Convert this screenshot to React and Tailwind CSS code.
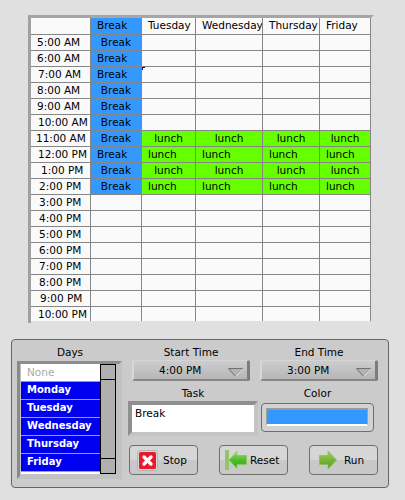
const font = { fontFamily: '"DejaVu Sans", sans-serif' };
const times = ['5:00 AM','6:00 AM','7:00 AM','8:00 AM','9:00 AM','10:00 AM','11:00 AM','12:00 PM','1:00 PM','2:00 PM','3:00 PM','4:00 PM','5:00 PM','6:00 PM','7:00 PM','8:00 PM','9:00 PM','10:00 PM'];
const timePad = { '5:00 AM':'pl-[6px]','6:00 AM':'pl-[6px]','7:00 AM':'pl-[7px]','8:00 AM':'pl-[6px]','9:00 AM':'pl-[6px]','10:00 AM':'pl-[7px]','11:00 AM':'pl-[5px]','12:00 PM':'pl-[7px]','1:00 PM':'pl-[10px]','2:00 PM':'pl-[8px]','3:00 PM':'pl-[8px]','4:00 PM':'pl-[8px]','5:00 PM':'pl-[8px]','6:00 PM':'pl-[8px]','7:00 PM':'pl-[8px]','8:00 PM':'pl-[8px]','9:00 PM':'pl-[9px]','10:00 PM':'pl-[7px]' };
const breakLeft = ['6:00 AM','7:00 AM','12:00 PM'];
const lunchRows = { '11:00 AM':'center','12:00 PM':'left','1:00 PM':'center','2:00 PM':'left' };

function Cell({ children, color, align, extra }) {
  const bg = color === 'blue' ? 'bg-[#3399ff]' : color === 'green' ? 'bg-[#66ff00]' : 'bg-[#fafafa]';
  const al = align === 'left' ? 'pl-[6px] text-left' : 'text-center';
  return <div className={`relative overflow-hidden whitespace-nowrap leading-[15px] ${bg} ${al}`}>{children}{extra}</div>;
}

function Table() {
  return (
    <div className="ml-[28px] mt-[15px] w-[346px] border-t-[3px] border-l-[3px] border-r-[3px] border-t-[#a6a6a6] border-l-[#a0a0a0] border-r-[#e0e0e0] pb-[2px]">
      <div className="grid grid-cols-[59px_50px_53px_66px_56px_50px] grid-rows-[16px_repeat(17,15px)_14px] gap-px bg-[#868686] border-r border-[#868686] text-[10.5px] text-black">
        <Cell />
        <Cell color="blue" align="left">Break</Cell>
        <Cell align="left">Tuesday</Cell>
        <Cell align="left">Wednesday</Cell>
        <Cell align="left">Thursday</Cell>
        <Cell align="left">Friday</Cell>
        {times.map((t, i) => {
          const l = lunchRows[t];
          const isBreak = i < 10;
          return [
            <div key={t} className={`overflow-hidden whitespace-nowrap leading-[15px] bg-[#fafafa] ${timePad[t]}`}>{t}</div>,
            <Cell key={t + 'b'} color={isBreak ? 'blue' : undefined} align={breakLeft.includes(t) ? 'left' : 'center'}>{isBreak ? 'Break' : ''}</Cell>,
            ...[0, 1, 2, 3].map((c) => (
              <Cell
                key={t + c}
                color={l ? 'green' : undefined}
                align={l}
                extra={t === '7:00 AM' && c === 0 ? <span className="absolute left-0 top-0 h-[3px] w-[3px] border-l border-t border-[#0000e0]" /> : null}
              >
                {l ? 'lunch' : ''}
              </Cell>
            )),
          ];
        })}
      </div>
    </div>
  );
}

function Days() {
  const days = ['Monday', 'Tuesday', 'Wednesday', 'Thursday', 'Friday'];
  return (
    <div className="w-[105px]">
      <div className="h-[21px] pt-[5px] pl-[1px] text-center leading-[14px]">Days</div>
      <div className="flex h-[118px] border-[3px] border-t-[#8e8e8e] border-l-[#8a8a8a] border-r-[#c2c2c2] border-b-[#c2c2c2] pl-[1px] pr-[3px] bg-[#c2c2c2]">
        <div className="w-[81px] h-[110px] bg-white">
          <div className="h-[18px] pl-[6px] leading-[16px] text-[#a8a8a8] border-b border-[#9a9a9a]">None</div>
          {days.map((d) => (
            <div key={d} className="h-[18px] pl-[6px] leading-[16px] bg-[#0000f0] text-white font-bold text-[10px] border-b border-[#9a9ad8]">{d}</div>
          ))}
        </div>
        <div className="w-[16px] h-[110px] border border-black bg-[#b0b0b0] flex flex-col justify-between">
          <div className="h-[15px] border-b border-black" />
          <div className="h-[15px] border-t border-black" />
        </div>
      </div>
    </div>
  );
}

function Dropdown({ value }) {
  return (
    <div className="relative h-[21px] w-[118px] rounded-[2px] border-t border-l-2 border-t-[#d4d4d4] border-l-[#d8d8d8] border-r-[3px] border-r-[#7c7c7c] border-b-2 border-b-[#868686] bg-gradient-to-b from-[#cdcdcd] to-[#b6b6b6] leading-[18px]">
      <div className="pl-[25px]">{value}</div>
      <svg className="absolute right-[4px] top-[7px]" width="15" height="9" viewBox="0 0 15 9">
        <path d="M0.5 0.5 L14.5 0.5 L7.5 8.5 Z" fill="#b4b4b4" stroke="#6f6f6f" strokeWidth="1" />
        <path d="M14.5 1 L7.8 8.5" stroke="#f0f0f0" strokeWidth="1" fill="none" />
      </svg>
    </div>
  );
}

function BtnIcon({ kind }) {
  if (kind === 'stop') {
    return (
      <svg width="21" height="21" viewBox="0 0 21 21">
        <rect x="0.5" y="0.5" width="20" height="20" rx="2.5" fill="#d8d8d8" stroke="#b4b4b4" />
        <rect x="2" y="2" width="17" height="17" rx="1.5" fill="#e8192c" />
        <path d="M7 7 L14 14 M14 7 L7 14" stroke="#fff" strokeWidth="3.4" strokeLinecap="round" />
      </svg>
    );
  }
  if (kind === 'reset') {
    return (
      <svg width="22" height="20" viewBox="0 0 22 20">
        <defs>
          <linearGradient id="rg" x1="0" y1="0" x2="0" y2="1">
            <stop offset="0" stopColor="#9be06a" />
            <stop offset="0.5" stopColor="#4fbd26" />
            <stop offset="1" stopColor="#38a51c" />
          </linearGradient>
        </defs>
        <rect x="0" y="0" width="4" height="20" fill="#93c465" />
        <path d="M4 10 L12 1.5 L12 5.5 L21.5 5.5 L21.5 14.5 L12 14.5 L12 18.5 Z" fill="url(#rg)" stroke="#86c85c" strokeWidth="0.8" />
      </svg>
    );
  }
  return (
    <svg width="18" height="20" viewBox="0 0 18 20">
      <defs>
        <linearGradient id="rn" x1="0" y1="0" x2="0" y2="1">
          <stop offset="0" stopColor="#a6d266" />
          <stop offset="0.5" stopColor="#78b436" />
          <stop offset="1" stopColor="#55962a" />
        </linearGradient>
      </defs>
      <path d="M17.5 10 L9 1 L9 5.5 L0.5 5.5 L0.5 14.5 L9 14.5 L9 19 Z" fill="url(#rn)" stroke="#8cbf5a" strokeWidth="0.8" />
    </svg>
  );
}

function Btn({ label, kind, pad, gap }) {
  return (
    <div className={`flex items-center h-[30px] w-[69px] rounded-[4px] border border-[#6e6e6e] bg-[linear-gradient(#d6d6d6_0,#d6d6d6_48%,#c8c8c8_52%,#c8c8c8_100%)] ${pad} ${gap}`}>
      <BtnIcon kind={kind} />
      <span>{label}</span>
    </div>
  );
}

function Panel() {
  return (
    <div className="ml-[11px] mt-[16px] flex h-[149px] w-[378px] rounded-[4px] border border-[#666] bg-[#cbcbcb] pl-[5px] text-[10.5px] text-black leading-[14px]">
      <Days />
      <div className="ml-[6px] w-[250px]">
        <div className="flex pl-[4px] gap-[10px] h-[41px]">
          <div className="w-[118px]">
            <div className="h-[20px] pt-[5px] text-center">Start Time</div>
            <Dropdown value="4:00 PM" />
          </div>
          <div className="w-[118px]">
            <div className="h-[20px] pt-[5px] text-center">End Time</div>
            <Dropdown value="3:00 PM" />
          </div>
        </div>
        <div className="flex h-[44px] mt-[4px]">
          <div className="w-[130px]">
            <div className="h-[16px] pt-[1px] text-center">Task</div>
            <div className="h-[35px] border-[4px] border-t-[#8f8f8f] border-l-[#8f8f8f] border-r-[#c4c4c4] border-b-[#c4c4c4] bg-white pl-[3px] pt-[1px]">Break</div>
          </div>
          <div className="ml-[3px] w-[113px]">
            <div className="h-[18px] pt-[1px] text-center">Color</div>
            <div className="h-[29px] rounded-[4px] border border-[#6e6e6e] bg-[#d2d2d2] pl-[4px] pr-[5px] pt-[4px]">
              <div className="h-[18px] border-x border-t-2 border-b-2 border-x-[#a0a0a0] border-t-[#9a9a9a] border-b-white bg-[#3399ff]" />
            </div>
          </div>
        </div>
        <div className="mt-[16px] flex gap-[21px] pl-px">
          <Btn label="Stop" kind="stop" pad="pl-[7px]" gap="gap-[5px]" />
          <Btn label="Reset" kind="reset" pad="pl-[5px]" gap="gap-[3px]" />
          <Btn label="Run" kind="run" pad="pl-[9px]" gap="gap-[7px]" />
        </div>
      </div>
    </div>
  );
}

export default function App() {
  return (
    <div className="h-[500px] w-[405px] overflow-hidden bg-[#e0e0e0]" style={font}>
      <Table />
      <Panel />
    </div>
  );
}
